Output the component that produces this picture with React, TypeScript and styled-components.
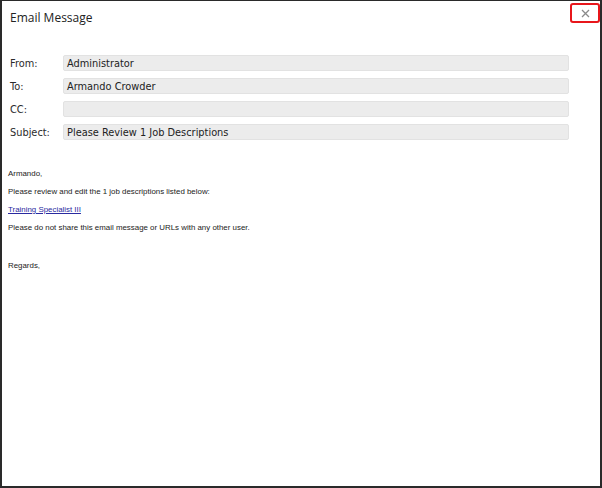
import { Fragment } from "react";
import styled, { createGlobalStyle } from "styled-components";

const GlobalStyle = createGlobalStyle`
  html, body { margin: 0; padding: 0; background: #fff; }
  body { width: 602px; height: 488px; overflow: hidden; }
`;

const Frame = styled.div`
  box-sizing: border-box;
  width: 602px;
  height: 488px;
  border-top: 1px solid #2a2a2a;
  border-left: 2px solid #2a2a2a;
  border-right: 2px solid #2a2a2a;
  border-bottom: 2px solid #2a2a2a;
  background: #fff;
  position: relative;
`;

const Header = styled.div`
  display: flex;
  align-items: center;
  height: 32px;
  padding: 0 0 0 8px;
`;

const Title = styled.h1`
  margin: 0;
  font-family: "Open Sans", "Noto Sans", sans-serif;
  font-size: 12px;
  font-weight: 400;
  color: #222;
`;

const CloseButton = styled.button`
  position: absolute;
  top: 2px;
  right: 0;
  width: 30px;
  height: 20px;
  border: 2px solid #e8161b;
  border-radius: 3px;
  background: #fff;
  display: flex;
  align-items: center;
  justify-content: center;
  padding: 0;
`;

const Fields = styled.div`
  display: grid;
  grid-template-columns: 53px 506px;
  row-gap: 7px;
  padding: 22px 0 0 8px;
`;

const Label = styled.label`
  font-family: "DejaVu Sans", Verdana, sans-serif;
  font-size: 9.8px;
  color: #2b2b2b;
  display: flex;
  align-items: center;
  height: 16px;
`;

const Field = styled.div`
  box-sizing: border-box;
  height: 16px;
  background: #ececec;
  border: 1px solid #e2e2e2;
  border-radius: 2px;
  font-family: "DejaVu Sans", Verdana, sans-serif;
  font-size: 9.8px;
  color: #222;
  display: flex;
  align-items: center;
  padding-left: 3px;
`;

const Body = styled.div`
  padding: 30px 0 0 6px;
  font-family: "Liberation Sans", Arial, sans-serif;
  font-size: 7.9px;
  color: #222;
`;

const Para = styled.p<{ $gap?: number }>`
  margin: 0 0 ${(p) => p.$gap ?? 10}px 0;
  line-height: 8px;
`;

const Link = styled.a`
  color: #2a2aa0;
  text-decoration: underline;
`;

const rows = [
  { label: "From:", value: "Administrator" },
  { label: "To:", value: "Armando Crowder" },
  { label: "CC:", value: "" },
  { label: "Subject:", value: "Please Review 1 Job Descriptions" },
];

export default function App() {
  return (
    <>
      <GlobalStyle />
      <Frame>
        <Header>
          <Title>Email Message</Title>
        </Header>
        <CloseButton aria-label="Close">
          <svg width="9" height="9" viewBox="0 0 9 9">
            <path d="M1 1L8 8M8 1L1 8" stroke="#8a8a8a" strokeWidth="1.3" />
          </svg>
        </CloseButton>
        <Fields>
          {rows.map((r) => (
            <Fragment key={r.label}>
              <Label>{r.label}</Label>
              <Field>{r.value}</Field>
            </Fragment>
          ))}
        </Fields>
        <Body>
          <Para>Armando,</Para>
          <Para>Please review and edit the 1 job descriptions listed below:</Para>
          <Para>
            <Link href="#">Training Specialist III</Link>
          </Para>
          <Para $gap={30}>Please do not share this email message or URLs with any other user.</Para>
          <Para>Regards,</Para>
        </Body>
      </Frame>
    </>
  );
}
